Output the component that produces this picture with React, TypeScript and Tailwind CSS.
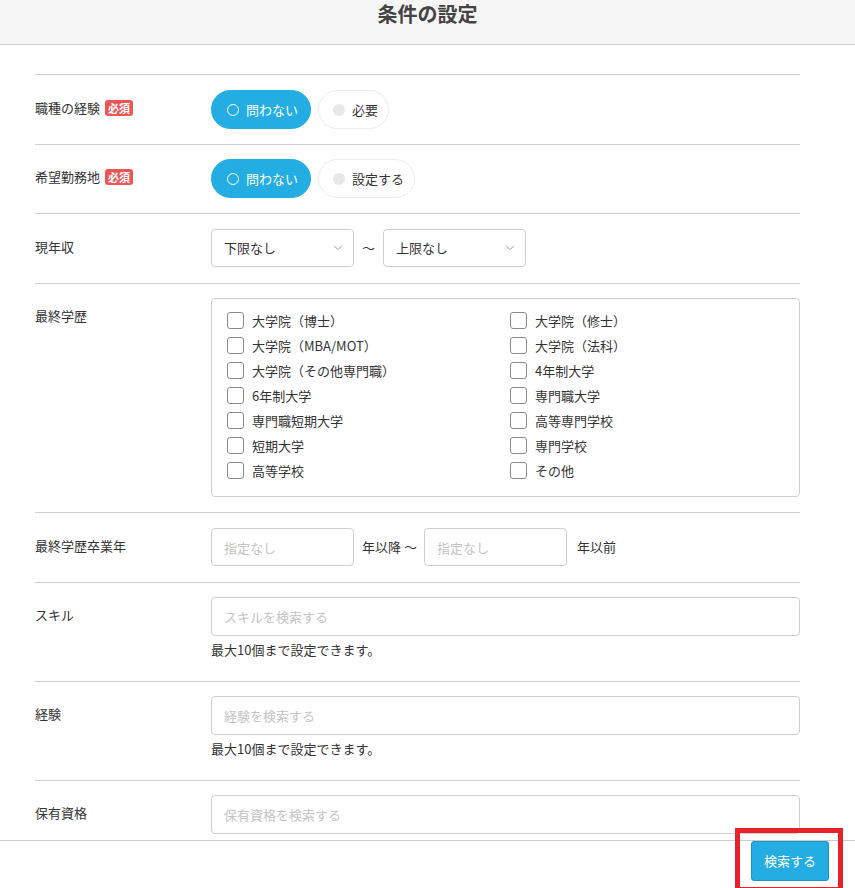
import React from "react";
import { ChevronDown } from "lucide-react";

const font = { fontFamily: '"Noto Sans CJK JP", "Noto Sans", sans-serif' };

function Required() {
  return (
    <span className="ml-[5px] inline-flex h-[16px] items-center rounded-[3px] bg-[#ef5555] px-[3px] text-[11px] font-bold leading-none text-white">
      必須
    </span>
  );
}

function Row({
  label,
  required,
  children,
  className = "",
}: {
  label: string;
  required?: boolean;
  children: React.ReactNode;
  className?: string;
}) {
  return (
    <div className={`flex border-t border-[#d0d0d0] ${className}`}>
      <div className="flex w-[176px] shrink-0 items-center self-start pt-[8px] text-[13px] leading-[20px] text-[#333]">
        {label}
        {required && <Required />}
      </div>
      <div className="min-w-0 flex-1">{children}</div>
    </div>
  );
}

function Pill({ active, children }: { active?: boolean; children: React.ReactNode }) {
  return active ? (
    <div className="flex h-[39px] items-center gap-[7px] rounded-full border border-[#24ade3] bg-[#24ade3] pl-[15px] pr-[12px] text-[13px] leading-[18px] text-white">
      <span className="h-[12px] w-[12px] rounded-full border-[1.5px] border-white" />
      {children}
    </div>
  ) : (
    <div className="flex h-[39px] items-center gap-[7px] rounded-full border border-[#ececec] bg-white pl-[14px] pr-[10px] text-[13px] leading-[18px] text-[#333]">
      <span className="h-[12px] w-[12px] rounded-full bg-[#e8e8e8]" />
      {children}
    </div>
  );
}

function SelectBox({ value }: { value: string }) {
  return (
    <div className="flex h-[38px] w-[143px] items-center justify-between rounded-[4px] border border-[#cfcfcf] bg-white pl-[12px] pr-[8px] text-[13px] text-[#333]">
      <span>{value}</span>
      <ChevronDown size={14} strokeWidth={1.6} color="#999" />
    </div>
  );
}

function TextBox({ placeholder, className = "" }: { placeholder: string; className?: string }) {
  return (
    <input
      readOnly
      placeholder={placeholder}
      className={`rounded-[4px] border border-[#cfcfcf] bg-white px-[12px] text-[13px] text-[#333] outline-none placeholder:text-[#c4c4c4] ${className}`}
      style={font}
    />
  );
}

function Help() {
  return <p className="mt-[4px] mb-[5px] text-[13px] leading-[20px] text-[#333]">最大10個まで設定できます。</p>;
}

const degrees = [
  "大学院（博士）",
  "大学院（修士）",
  "大学院（MBA/MOT）",
  "大学院（法科）",
  "大学院（その他専門職）",
  "4年制大学",
  "6年制大学",
  "専門職大学",
  "専門職短期大学",
  "高等専門学校",
  "短期大学",
  "専門学校",
  "高等学校",
  "その他",
];

export default function App() {
  return (
    <div className="relative flex h-[888px] w-[855px] flex-col overflow-hidden bg-white" style={font}>
      {/* header */}
      <div className="flex h-[45px] shrink-0 items-start justify-center border-b border-[#cccccc] bg-[#f6f6f6]">
        <h1 className="text-[20px] font-bold leading-[28px] text-[#444]">条件の設定</h1>
      </div>

      {/* form body */}
      <div className="min-h-0 flex-1 overflow-hidden pt-[29px] pl-[35px] pr-[55px]">
        <Row label="職種の経験" required className="pt-[15px] pb-[15px]">
          <div className="flex gap-[7px]">
            <Pill active>問わない</Pill>
            <Pill>必要</Pill>
          </div>
        </Row>

        <Row label="希望勤務地" required className="pt-[14px] pb-[15px]">
          <div className="flex gap-[7px]">
            <Pill active>問わない</Pill>
            <Pill>設定する</Pill>
          </div>
        </Row>

        <Row label="現年収" className="pt-[15px] pb-[16px]">
          <div className="flex items-center gap-[8px]">
            <SelectBox value="下限なし" />
            <span className="text-[13px] text-[#333]">〜</span>
            <SelectBox value="上限なし" />
          </div>
        </Row>

        <Row label="最終学歴" className="pt-[14px] pb-[15px]">
          <div className="rounded-[4px] border border-[#cfcfcf] pt-[9px] pb-[13px] pl-[15px]">
            <div className="grid grid-cols-[283px_1fr]">
              {degrees.map((d) => (
                <label key={d} className="flex h-[25px] items-center gap-[8px] text-[13px] leading-[18px] text-[#333]">
                  <span className="h-[17px] w-[17px] shrink-0 rounded-[3px] border border-[#8a8a8a] bg-white" />
                  {d}
                </label>
              ))}
            </div>
          </div>
        </Row>

        <Row label="最終学歴卒業年" className="pt-[15px] pb-[16px]">
          <div className="flex items-center text-[13px] text-[#333]">
            <TextBox placeholder="指定なし" className="h-[38px] w-[143px]" />
            <span className="ml-[8px] mr-[7px]">年以降 〜</span>
            <TextBox placeholder="指定なし" className="h-[38px] w-[143px]" />
            <span className="ml-[10px]">年以前</span>
          </div>
        </Row>

        <Row label="スキル" className="pt-[14px] pb-[16px]">
          <TextBox placeholder="スキルを検索する" className="h-[39px] w-full" />
          <Help />
        </Row>

        <Row label="経験" className="pt-[14px] pb-[16px]">
          <TextBox placeholder="経験を検索する" className="h-[39px] w-full" />
          <Help />
        </Row>

        <Row label="保有資格" className="pt-[14px] pb-[15px]">
          <TextBox placeholder="保有資格を検索する" className="h-[39px] w-full" />
        </Row>
      </div>

      {/* footer */}
      <div className="flex h-[48px] shrink-0 items-start justify-end border-t border-[#cccccc] bg-white pr-[26px]">
        <button className="h-[40px] w-[78px] rounded-[3px] border border-[#1d93c6] bg-[#24ade3] text-[13px] text-white">
          検索する
        </button>
      </div>

      {/* highlight frame around the search button */}
      <div className="pointer-events-none absolute left-[735px] top-[828px] h-[64px] w-[108px] border-[5px] border-[#e8202a]" />
    </div>
  );
}
